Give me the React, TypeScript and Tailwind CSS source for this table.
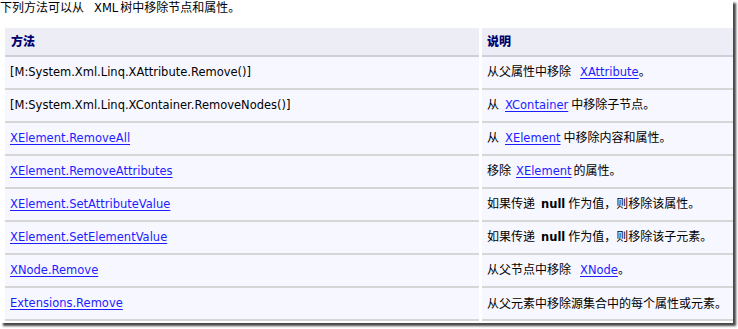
import type { ReactNode } from 'react';

const latin = '[font-family:"DejaVu_Sans","Noto_Sans_CJK_SC",sans-serif]';

function A({ children, className = '' }: { children: ReactNode; className?: string }) {
  return <span className={`text-[#1d1dff] underline underline-offset-[2px] ${className}`}>{children}</span>;
}

function Null({ className = '' }: { className?: string }) {
  return <b className={`font-bold text-black ${className}`}>null</b>;
}

const rows: { method: ReactNode; desc: ReactNode }[] = [
  {
    method: <span>[M:System.Xml.Linq.XAttribute.Remove()]</span>,
    desc: (
      <>
        从父属性中移除<A className="ml-[9px]">XAttribute</A>。
      </>
    ),
  },
  {
    method: <span>[M:System.Xml.Linq.XContainer.RemoveNodes()]</span>,
    desc: (
      <>
        从<A className="ml-[6px] mr-[3px]">XContainer</A>中移除子节点。
      </>
    ),
  },
  {
    method: <A>XElement.RemoveAll</A>,
    desc: (
      <>
        从<A className="ml-[6px] mr-[3px]">XElement</A>中移除内容和属性。
      </>
    ),
  },
  {
    method: <A>XElement.RemoveAttributes</A>,
    desc: (
      <>
        移除<A className="ml-[5px] mr-[2px]">XElement</A>的属性。
      </>
    ),
  },
  {
    method: <A>XElement.SetAttributeValue</A>,
    desc: (
      <>
        如果传递<Null className="ml-[6px] mr-[3px]" />作为值，则移除该属性。
      </>
    ),
  },
  {
    method: <A>XElement.SetElementValue</A>,
    desc: (
      <>
        如果传递<Null className="ml-[6px] mr-[3px]" />作为值，则移除该子元素。
      </>
    ),
  },
  {
    method: <A>XNode.Remove</A>,
    desc: (
      <>
        从父节点中移除<A className="ml-[9px]">XNode</A>。
      </>
    ),
  },
  {
    method: <A>Extensions.Remove</A>,
    desc: <>从父元素中移除源集合中的每个属性或元素。</>,
  },
];

export default function App() {
  return (
    <div className={`w-[738px] h-[329px] bg-white overflow-hidden text-[11.5px] text-black ${latin}`}>
      {/* 截图本体，右下带阴影 */}
      <div className="w-[733px] h-[323px] bg-white shadow-[3px_3px_2px_rgba(40,40,40,0.85)]">
        <p className="h-[28px] pt-[1px] text-[12px] leading-[14px]">
          下列方法可以从<span className="ml-[10px] mr-[2px] text-[11.5px]">XML</span>树中移除节点和属性。
        </p>

        <div className="ml-[5px] grid grid-cols-[474px_1fr] gap-x-[3px]">
          <div className="h-[29px] bg-[#ededf6] border-b-2 border-[#cfcfdc] flex items-center px-[6px] text-[12px] font-black text-[#00006e]">
            方法
          </div>
          <div className="h-[29px] bg-[#ededf6] border-b-2 border-[#cfcfdc] flex items-center px-[5px] text-[12px] font-black text-[#00006e]">
            说明
          </div>

          {rows.map((r, i) => (
            <div key={i} className="contents">
              <div className="h-[33px] bg-[#f7f7ff] border-b-2 border-[#d6d6d6] flex items-center px-[5px] whitespace-nowrap">
                {r.method}
              </div>
              <div className="h-[33px] bg-[#f7f7ff] border-b-2 border-[#d6d6d6] flex items-center px-[5px] whitespace-nowrap text-[12px]">
                <span className="[&>span]:text-[11.5px] [&>b]:text-[11.5px]">{r.desc}</span>
              </div>
            </div>
          ))}
        </div>
      </div>
    </div>
  );
}
